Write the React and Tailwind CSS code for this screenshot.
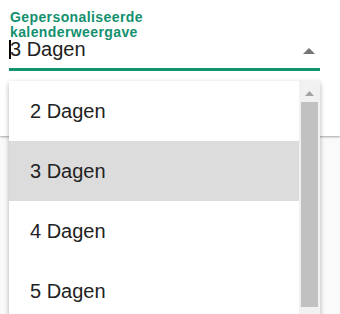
import React from 'react';

const options = ['2 Dagen', '3 Dagen', '4 Dagen', '5 Dagen'];

export default function App() {
  const selected = '3 Dagen';

  return (
    <div className="relative w-[340px] h-[314px] overflow-hidden bg-[#fafafa] font-['Liberation_Sans',Arial,sans-serif]">
      {/* page header area behind the menu */}
      <div className="h-[136px] bg-white shadow-[0_1px_2px_rgba(0,0,0,0.35)]">
        <div className="w-[311px] ml-[9px] pt-[10px]">
          <label className="block text-[14px] font-bold leading-[15px] tracking-[0.4px] text-[#13906e] pl-[1px]">
            Gepersonaliseerde
            <br />
            kalenderweergave
          </label>
          <div className="flex items-center h-[22px] mt-[-2px]">
            <span className="w-[2px] h-[19px] bg-black mr-[-1px]" />
            <span className="flex-1 text-[20px] leading-[22px] text-[#212121]">{selected}</span>
            <svg width="12" height="6" viewBox="0 0 12 6" className="mr-[5px] mt-[4px]">
              <path d="M0 6 L6 0 L12 6 Z" fill="#757575" />
            </svg>
          </div>
          <div className="h-[3px] bg-[#12936f] mt-[8px]" />
        </div>
      </div>

      {/* open dropdown menu */}
      <div className="absolute top-[81px] left-[9px] w-[311px] h-[240px] flex bg-white shadow-[0_2px_5px_rgba(0,0,0,0.3)]">
        <ul className="flex-1">
          {options.map((opt) => (
            <li
              key={opt}
              className={`h-[60px] flex items-center pl-[21px] text-[20px] text-[#222] ${
                opt === selected ? 'bg-[#dcdcdc]' : 'bg-white'
              }`}
            >
              {opt}
            </li>
          ))}
        </ul>
        <div className="w-[21px] bg-[#f1f1f1] flex flex-col items-center pt-[10px]">
          <svg width="9" height="5" viewBox="0 0 9 5">
            <path d="M0 5 L4.5 0 L9 5 Z" fill="#a3a3a3" />
          </svg>
          <div className="w-[17px] h-[205px] bg-[#c1c1c1] mt-[6px]" />
        </div>
      </div>
    </div>
  );
}
